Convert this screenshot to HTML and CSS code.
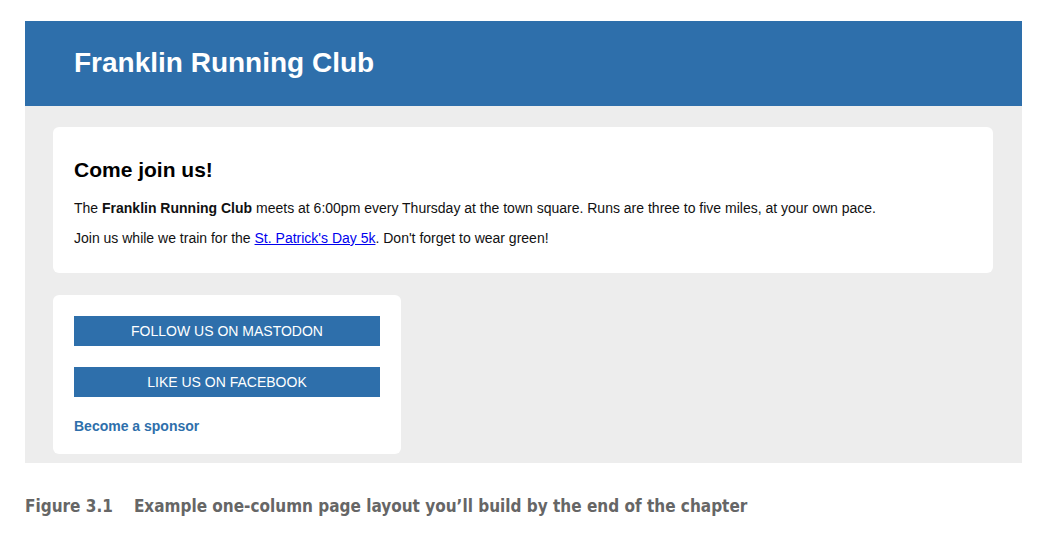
FILE: index.html
```html
<!DOCTYPE html>
<html>
<head>
<meta charset="utf-8">
<link rel="stylesheet" href="styles.css">
</head>
<body>
<div class="frame">
  <header class="masthead">
    <h1 class="title">Franklin Running Club</h1>
  </header>
  <main class="content">
    <section class="card intro">
      <h2 class="intro-title">Come join us!</h2>
      <p class="text">The <strong>Franklin Running Club</strong> meets at 6:00pm every Thursday at the town square. Runs are three to five miles, at your own pace.</p>
      <p class="text">Join us while we train for the <a class="link" href="#">St. Patrick's Day 5k</a>. Don't forget to wear green!</p>
    </section>
    <section class="card social">
      <a class="button" href="#">FOLLOW US ON MASTODON</a>
      <a class="button" href="#">LIKE US ON FACEBOOK</a>
      <a class="sponsor" href="#">Become a sponsor</a>
    </section>
  </main>
</div>
<p class="caption"><span class="fig">Figure 3.1</span>Example one-column page layout you’ll build by the end of the chapter</p>
</body>
</html>
```

FILE: styles.css
```css
html, body {
  margin: 0;
  padding: 0;
  background: #ffffff;
}
body {
  padding: 21px 21px 0 25px;
  font-family: "Liberation Sans", Arial, sans-serif;
  width: 997px;
}
.frame {
  width: 997px;
  background: #ededed;
}
.masthead {
  background: #2e6fab;
  height: 85px;
  display: flex;
  align-items: center;
  padding-left: 49px;
}
.title {
  margin: 0;
  color: #ffffff;
  font-size: 28px;
  font-weight: bold;
  padding-bottom: 2px;
}
.content {
  padding: 21px 29px 9px 28px;
  display: flex;
  flex-direction: column;
  gap: 22px;
  align-items: flex-start;
}
.card {
  background: #ffffff;
  border-radius: 6px;
  box-sizing: border-box;
}
.intro {
  width: 940px;
  height: 146px;
  padding: 30px 21px 0 21px;
}
.intro-title {
  margin: 0 0 17px 0;
  font-size: 21px;
  font-weight: bold;
  color: #000;
  line-height: 26px;
}
.text {
  margin: 0 0 14px 0;
  font-size: 14px;
  line-height: 16px;
  color: #111;
}
.text strong {
  font-weight: bold;
}
.link {
  color: #0000ee;
  text-decoration: underline;
}
.social {
  width: 348px;
  height: 159px;
  padding: 21px 21px 0 21px;
  display: flex;
  flex-direction: column;
}
.button {
  display: block;
  width: 306px;
  height: 30px;
  line-height: 31px;
  background: #2e6fab;
  color: #ffffff;
  text-align: center;
  text-decoration: none;
  font-size: 14px;
  margin-bottom: 21px;
}
.sponsor {
  color: #2e6fab;
  font-weight: bold;
  font-size: 14px;
  text-decoration: none;
  margin-top: 0;
}
.caption {
  margin: 33px 0 0 0;
  font-family: "DejaVu Sans Condensed", "DejaVu Sans", sans-serif;
  font-stretch: condensed;
  font-weight: bold;
  font-size: 17px;
  color: #666666;
}
.fig {
  margin-right: 21px;
}
```
